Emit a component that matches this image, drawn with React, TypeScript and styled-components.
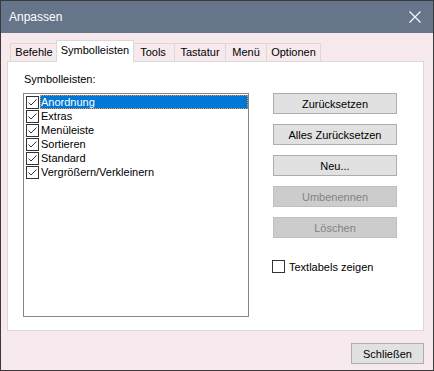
import styled, { createGlobalStyle } from "styled-components";

const Global = createGlobalStyle`
  html, body {
    margin: 0;
    padding: 0;
    background: #ffffff;
  }
  * { box-sizing: border-box; }
`

const Window = styled.div`
  width: 434px;
  height: 371px;
  border: 1px solid #3a3a3a;
  display: flex;
  flex-direction: column;
  font-family: "Liberation Sans", Arial, sans-serif;
  font-size: 11px;
  color: #000;
  background-color: #f7eef1;
  background-image: repeating-conic-gradient(#fbe0e8 0 25%, #f2f2f2 0 50%);
  background-size: 2px 2px;
`

const TitleBar = styled.div`
  height: 32px;
  background: #66758a;
  display: flex;
  align-items: center;
  justify-content: space-between;
  padding: 0 12px 0 8px;
  color: #ffffff;
  font-size: 12px;
`

const Body = styled.div`
  flex: 1;
  display: flex;
  flex-direction: column;
  padding: 8px 9px 0 6px;
`

const TabRow = styled.div`
  display: flex;
  align-items: flex-end;
  height: 21px;
  padding-left: 3px;
  position: relative;
  z-index: 1;
  margin-bottom: -1px;
`

const Tab = styled.div<{ $active?: boolean; $first?: boolean; $w: number }>`
  width: ${p => p.$w}px;
  flex: none;
  height: ${p => (p.$active ? "22px" : "19px")};
  margin: 0 ${p => (p.$active ? "-2px" : "0")};
  padding-top: ${p => (p.$active ? "3px" : "2px")};
  text-align: center;
  border: 1px solid #d9d9d9;
  border-bottom: ${p => (p.$active ? "none" : "1px solid #d9d9d9")};
  border-left-width: ${p => (p.$first || p.$active ? "1px" : "0")};
  background: ${p => (p.$active ? "#ffffff" : "transparent")};
  position: relative;
  z-index: ${p => (p.$active ? 2 : 1)};
  white-space: nowrap;
`

const Panel = styled.div`
  height: 270px;
  background: #ffffff;
  border: 1px solid #d9d9d9;
  display: flex;
  padding: 10px 0 0 15px;
`

const LeftCol = styled.div`
  display: flex;
  flex-direction: column;
`

const Label = styled.div`
  height: 20px;
  padding-left: 1px;
  margin-top: 1px;
`

const ListBox = styled.div`
  width: 226px;
  height: 224px;
  border: 1px solid #828790;
  padding: 1px 0 0 2px;
  display: flex;
  flex-direction: column;
`

const Row = styled.div`
  display: flex;
  align-items: center;
  height: 14px;
`

const ItemText = styled.div<{ $selected?: boolean }>`
  flex: 1;
  height: 14px;
  line-height: 12px;
  margin-left: 1px;
  color: ${p => (p.$selected ? "#ffffff" : "#000000")};
  background: ${p => (p.$selected ? "#0078d7" : "transparent")};
  border: 1px ${p => (p.$selected ? "dotted #ff9030" : "solid transparent")};
`

const Box = styled.div`
  width: 13px;
  height: 13px;
  border: 1px solid #333333;
  background: #ffffff;
  display: flex;
  align-items: center;
  justify-content: center;
  flex: none;
`

const RightCol = styled.div`
  display: flex;
  flex-direction: column;
  margin-left: 24px;
  padding-top: 21px;
  gap: 10px;
`

const Button = styled.div<{ $disabled?: boolean }>`
  width: 124px;
  height: 21px;
  border: 1px solid ${p => (p.$disabled ? "#bfbfbf" : "#adadad")};
  background: ${p => (p.$disabled ? "#cccccc" : "#e1e1e1")};
  color: ${p => (p.$disabled ? "#838383" : "#000000")};
  display: flex;
  align-items: center;
  justify-content: center;
`

const CheckRow = styled.label`
  display: flex;
  align-items: center;
  gap: 4px;
  margin-top: 12px;
  margin-left: -1px;
`

const Footer = styled.div`
  display: flex;
  justify-content: flex-end;
  padding-top: 12px;
`

const FooterButton = styled(Button)`
  width: 73px;
`

const Check = () => (
  <svg width="11" height="11" viewBox="0 0 11 11">
    <path d="M1.5 5.5 L4 8 L9.5 2.5" fill="none" stroke="#333" strokeWidth="1" />
  </svg>
)

const items = ["Anordnung", "Extras", "Menüleiste", "Sortieren", "Standard", "Vergrößern/Verkleinern"]
const tabs = [
  { name: "Befehle", w: 48 },
  { name: "Symbolleisten", w: 78 },
  { name: "Tools", w: 43 },
  { name: "Tastatur", w: 51 },
  { name: "Menü", w: 41 },
  { name: "Optionen", w: 54 },
]

const App = () => {
  return (
    <>
      <Global />
      <Window>
        <TitleBar>
          <span>Anpassen</span>
          <svg width="12" height="12" viewBox="0 0 12 12">
            <path d="M0.5 0.5 L11.5 11.5 M11.5 0.5 L0.5 11.5" stroke="#fff" strokeWidth="1.1" />
          </svg>
        </TitleBar>
        <Body>
          <TabRow>
            {tabs.map((t, i) => (
              <Tab key={t.name} $w={t.w} $active={i === 1} $first={i === 0}>{t.name}</Tab>
            ))}
          </TabRow>
          <Panel>
            <LeftCol>
              <Label>Symbolleisten:</Label>
              <ListBox>
                {items.map((it, i) => (
                  <Row key={it}>
                    <Box><Check /></Box>
                    <ItemText $selected={i === 0}>{it}</ItemText>
                  </Row>
                ))}
              </ListBox>
            </LeftCol>
            <RightCol>
              <Button>Zurücksetzen</Button>
              <Button>Alles Zurücksetzen</Button>
              <Button>Neu...</Button>
              <Button $disabled>Umbenennen</Button>
              <Button $disabled>Löschen</Button>
              <CheckRow>
                <Box />
                <span>Textlabels zeigen</span>
              </CheckRow>
            </RightCol>
          </Panel>
          <Footer>
            <FooterButton>Schließen</FooterButton>
          </Footer>
        </Body>
      </Window>
    </>
  )
}

export default App;
